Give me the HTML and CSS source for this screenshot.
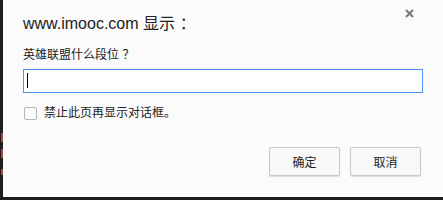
FILE: index.html
```html
<!DOCTYPE html>
<html lang="zh-CN">
<head>
    <meta charset="UTF-8">
    <title>www.imooc.com 显示</title>
    <link rel="stylesheet" href="styles.css">
</head>
<body>

<div class="screen">
    <div class="edge">
        <span class="mark mark-1"></span>
        <span class="mark mark-2"></span>
        <span class="mark mark-3"></span>
    </div>
    <div class="dialog">
        <button class="close-button" aria-label="关闭">
            <svg width="9" height="9" viewBox="0 0 9 9">
                <path d="M1 1 L8 8 M8 1 L1 8" stroke="#777" stroke-width="2"/>
            </svg>
        </button>
        <div class="title">www.imooc.com 显示<span class="punct">：</span></div>
        <div class="message">英雄联盟什么段位<span class="punct">？</span></div>
        <div class="prompt-input"><span class="caret"></span></div>
        <label class="suppress">
            <span class="checkbox"></span>
            <span>禁止此页再显示对话框。</span>
        </label>
        <div class="buttons">
            <button class="dialog-button">确定</button>
            <button class="dialog-button">取消</button>
        </div>
    </div>
</div>

</body>
</html>
```

FILE: styles.css
```css
html, body {
    margin: 0;
    padding: 0;
    overflow: hidden;
    background-color: #1e1e1e;
}

.screen {
    display: flex;
    width: 443px;
    height: 200px;
}

.edge {
    width: 3px;
    height: 197px;
    position: relative;
    background-color: #1e1e1e;
}

.mark {
    position: absolute;
    left: 1px;
    width: 2px;
    background-color: #a0483a;
}

.mark-1 { top: 133px; height: 9px; }
.mark-2 { top: 149px; height: 9px; }
.mark-3 { top: 169px; height: 6px; }

.dialog {
    position: relative;
    width: 440px;
    height: 197px;
    box-sizing: border-box;
    padding: 12px 20px 0 20px;
    background-color: #fbfbfb;
    font-family: "Liberation Sans", "Noto Sans CJK SC", sans-serif;
    color: #222;
    text-spacing-trim: space-all;
}

.punct {
    font-family: "Noto Sans CJK JP", sans-serif;
    padding-left: 0.3em;
}

.close-button {
    position: absolute;
    top: 9px;
    right: 29px;
    width: 9px;
    height: 9px;
    padding: 0;
    border: none;
    background: transparent;
    line-height: 0;
}

.title {
    font-size: 16px;
    line-height: 20px;
    height: 20px;
}

.message {
    margin-top: 14px;
    font-size: 12px;
    line-height: 16px;
    height: 16px;
}

.prompt-input {
    margin-top: 7px;
    width: 400px;
    height: 24px;
    box-sizing: border-box;
    border: 1px solid #4d90fe;
    background-color: #fff;
    padding: 3px 0 0 3px;
}

.caret {
    display: block;
    width: 1px;
    height: 15px;
    background-color: #000;
}

.suppress {
    display: flex;
    align-items: center;
    gap: 7px;
    margin-top: 12px;
    margin-left: 1px;
    font-size: 12px;
    line-height: 16px;
}

.checkbox {
    width: 13px;
    height: 13px;
    box-sizing: border-box;
    border: 1px solid #b5b5b5;
    border-radius: 2px;
    background-color: #fdfdfd;
}

.buttons {
    display: flex;
    justify-content: flex-end;
    gap: 10px;
    margin-top: 26px;
    padding-right: 2px;
    width: 400px;
    box-sizing: border-box;
}

.dialog-button {
    width: 71px;
    height: 29px;
    box-sizing: border-box;
    border: 1px solid #c8c8c8;
    border-radius: 2px;
    background-color: #f8f8f8;
    box-shadow: 0 1px 1px rgba(0, 0, 0, 0.12);
    font-family: "Liberation Sans", "Noto Sans CJK SC", sans-serif;
    font-size: 12px;
    color: #222;
    padding: 0;
}
```
